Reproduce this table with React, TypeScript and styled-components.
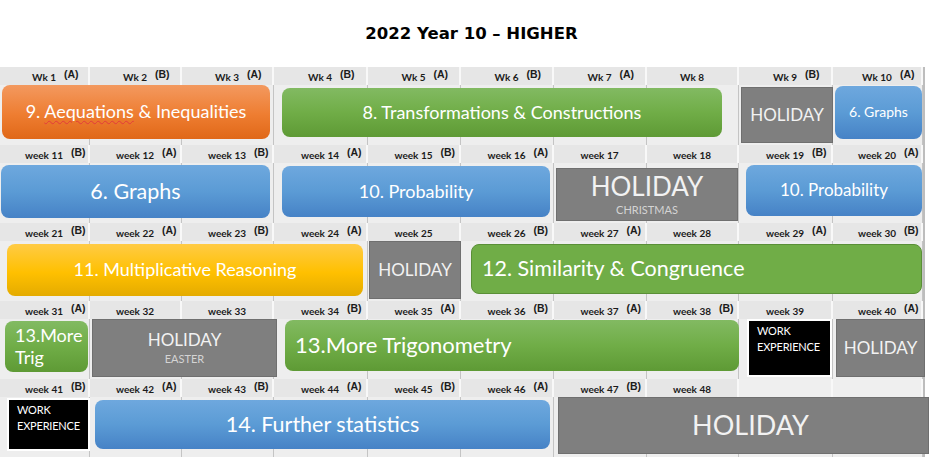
import React from "react";
import styled, { createGlobalStyle, css } from "styled-components";

const GlobalStyle = createGlobalStyle`
  html, body {
    margin: 0;
    padding: 0;
    background: #ffffff;
  }
  body {
    width: 929px;
    height: 458px;
    overflow: hidden;
    font-family: Lato, "Open Sans", sans-serif;
  }
`;

const COLS = "90px 92px 92px 94px 93px 93px 93px 92px 94px 90px";

type Tone = "orange" | "green" | "blue" | "yellow" | "flat" | "holiday" | "work";

const tones: Record<Tone, ReturnType<typeof css>> = {
  orange: css`
    background: linear-gradient(#f3995f, #ee7d31 55%, #e06818);
    border-radius: 8px;
  `,
  green: css`
    background: linear-gradient(#82ba62, #70ad47 50%, #5e9a35);
    border-radius: 8px;
  `,
  blue: css`
    background: linear-gradient(#6ea8de, #5b9bd5 50%, #4682c6);
    border-radius: 8px;
  `,
  yellow: css`
    background: linear-gradient(#ffcb45, #ffc000 55%, #e4ab00);
    border-radius: 8px;
  `,
  flat: css`
    background: #70ad47;
    border: 1px solid #5a8f37;
    border-radius: 8px;
  `,
  holiday: css`
    background: #7f7f7f;
    border: 1px solid #6f6f6f;
  `,
  work: css`
    background: #000000;
    border: 2px solid #ffffff;
    justify-content: flex-start;
  `,
};

const Page = styled.div`
  width: 929px;
`;

const Title = styled.h1`
  margin: 0;
  height: 67px;
  display: flex;
  align-items: center;
  justify-content: center;
  padding-left: 14px;
  box-sizing: border-box;
  font-family: "DejaVu Sans", sans-serif;
  font-size: 16.5px;
  font-weight: bold;
  color: #000;
`;

const Sheet = styled.div`
  width: 923px;
  border-right: 2px solid #bdbdbd;
  background: #efefef;
`;

const Band = styled.section`
  display: grid;
  grid-template-rows: 18px 60px;
`;

const HeaderRow = styled.div`
  display: grid;
  grid-template-columns: ${COLS};
`;

const HeadCell = styled.div<{ $blank?: boolean }>`
  background: ${(p) => (p.$blank ? "#efefef" : "#e6e6e6")};
  border-right: 2px solid #f8f8f8;
  border-bottom: 1px solid #f8f8f8;
  font-size: 10px;
  font-weight: bold;
  color: #1b1b1b;
  text-align: center;
  line-height: 20px;
  white-space: nowrap;
`;

/* zero-width holder so the week label stays centred and the (A)/(B) hangs to its right */
const Letter = styled.span`
  display: inline-block;
  width: 0;
  vertical-align: top;
  line-height: 15px;
  text-align: left;
  font-family: "Liberation Sans", sans-serif;
  font-size: 10.5px;

  & > span {
    padding-left: 8px;
  }
`;

const BodyRow = styled.div`
  display: grid;
  grid-template-columns: ${COLS};
  grid-template-rows: 60px;
`;

const BodyCell = styled.div<{ $col: number }>`
  grid-row: 1;
  grid-column: ${(p) => p.$col};
  border-right: 1px solid #c4c4c4;
  background: #eeeeee;
`;

const Block = styled.div<{
  $tone: Tone;
  $col: number;
  $span: number;
  $m: [number, number, number, number];
  $align?: "center" | "left";
  $size: number;
  $shift?: number;
}>`
  grid-row: 1;
  grid-column: ${(p) => p.$col} / span ${(p) => p.$span};
  margin: ${(p) => p.$m.map((v) => `${v}px`).join(" ")};
  box-sizing: border-box;
  z-index: 1;
  display: flex;
  flex-direction: column;
  justify-content: center;
  align-items: ${(p) => (p.$align === "left" ? "flex-start" : "center")};
  padding: ${(p) => (p.$align === "left" ? "0 10px" : `0 4px 0 ${4 + (p.$shift ?? 0)}px`)};
  color: #ffffff;
  font-size: ${(p) => p.$size}px;
  line-height: 1.2;
  ${(p) => tones[p.$tone]}
`;

const HolidayText = styled.span<{ $size: number }>`
  color: #f2f2f2;
  font-size: ${(p) => p.$size}px;
  line-height: 1.05;
`;

const Sub = styled.span`
  margin-top: 4px;
  color: #d4d4d4;
  font-size: 11px;
  line-height: 1.1;
`;

const Work = styled.span`
  align-self: flex-start;
  color: #ffffff;
  font-size: 11px;
  letter-spacing: -0.2px;
  line-height: 16px;
  padding: 2px 0 0 4px;
`;

const Typo = styled.span`
  text-decoration: underline wavy #e23b3b;
  text-decoration-thickness: 1px;
  text-underline-offset: 2px;
`;

type Week = { label: string; ab?: string } | null;

type Item = {
  tone: Tone;
  col: number;
  span: number;
  m: [number, number, number, number];
  size: number;
  align?: "center" | "left";
  shift?: number;
  content: React.ReactNode;
  sub?: string;
};

const wk = (label: string, ab?: string): Week => ({ label, ab });

const bands: { weeks: Week[]; items: Item[] }[] = [
  {
    weeks: [
      wk("Wk 1", "(A)"), wk("Wk 2", "(B)"), wk("Wk 3", "(A)"), wk("Wk 4", "(B)"), wk("Wk 5", "(A)"),
      wk("Wk 6", "(B)"), wk("Wk 7", "(A)"), wk("Wk 8"), wk("Wk 9", "(B)"), wk("Wk 10", "(A)"),
    ],
    items: [
      { tone: "orange", col: 1, span: 3, m: [0, 4, 6, 2], size: 18, content: <>9. <Typo>Aequations</Typo> &amp; Inequalities</> },
      { tone: "green", col: 4, span: 5, m: [3, 17, 8, 8], size: 18, content: "8. Transformations & Constructions" },
      { tone: "holiday", col: 9, span: 1, m: [2, 0, 2, 2], size: 17, content: "HOLIDAY" },
      { tone: "blue", col: 10, span: 1, m: [1, 1, 6, 2], size: 14, content: "6. Graphs" },
    ],
  },
  {
    weeks: [
      wk("week 11", "(B)"), wk("week 12", "(A)"), wk("week 13", "(B)"), wk("week 14", "(A)"), wk("week 15", "(B)"),
      wk("week 16", "(A)"), wk("week 17"), wk("week 18"), wk("week 19", "(B)"), wk("week 20", "(A)"),
    ],
    items: [
      { tone: "blue", col: 1, span: 3, m: [2, 4, 5, 1], size: 21.5, content: "6. Graphs" },
      { tone: "blue", col: 4, span: 3, m: [3, 4, 6, 8], size: 18, content: "10. Probability" },
      { tone: "holiday", col: 7, span: 2, m: [5, 1, 2, 2], size: 26, content: "HOLIDAY", sub: "CHRISTMAS" },
      { tone: "blue", col: 9, span: 2, m: [2, 1, 7, 7], size: 17, content: "10. Probability" },
    ],
  },
  {
    weeks: [
      wk("week 21", "(B)"), wk("week 22", "(A)"), wk("week 23", "(B)"), wk("week 24", "(A)"), wk("week 25"),
      wk("week 26", "(B)"), wk("week 27", "(A)"), wk("week 28"), wk("week 29", "(A)"), wk("week 30", "(B)"),
    ],
    items: [
      { tone: "yellow", col: 1, span: 4, m: [3, 5, 5, 7], size: 18, content: "11. Multiplicative Reasoning" },
      { tone: "holiday", col: 5, span: 1, m: [0, 0, 2, 1], size: 17, content: "HOLIDAY" },
      { tone: "flat", col: 6, span: 5, m: [3, 1, 7, 10], size: 21.5, align: "left", content: "12. Similarity & Congruence" },
    ],
  },
  {
    weeks: [
      wk("week 31", "(A)"), wk("week 32"), wk("week 33"), wk("week 34", "(B)"), wk("week 35", "(A)"),
      wk("week 36", "(B)"), wk("week 37", "(A)"), wk("week 38", "(B)"), wk("week 39"), wk("week 40", "(A)"),
    ],
    items: [
      { tone: "green", col: 1, span: 1, m: [2, 2, 7, 5], size: 18, align: "left", content: "13.More Trig" },
      { tone: "holiday", col: 2, span: 2, m: [0, -3, 2, 2], size: 17, content: "HOLIDAY", sub: "EASTER" },
      { tone: "green", col: 4, span: 5, m: [1, 0, 8, 11], size: 22, align: "left", content: "13.More Trigonometry" },
      { tone: "work", col: 9, span: 1, m: [0, 1, 2, 8], size: 11, content: "WORK EXPERIENCE" },
      { tone: "holiday", col: 10, span: 1, m: [0, -2, 2, 3], size: 17, content: "HOLIDAY" },
    ],
  },
  {
    weeks: [
      wk("week 41", "(B)"), wk("week 42", "(A)"), wk("week 43", "(B)"), wk("week 44", "(A)"), wk("week 45", "(B)"),
      wk("week 46", "(A)"), wk("week 47", "(B)"), wk("week 48"), null, null,
    ],
    items: [
      { tone: "work", col: 1, span: 1, m: [1, 0, 6, 7], size: 11, content: "WORK EXPERIENCE" },
      { tone: "blue", col: 2, span: 5, m: [3, 4, 8, 5], size: 21.5, content: "14. Further statistics" },
      { tone: "holiday", col: 7, span: 4, m: [0, -6, 3, 4], size: 27, shift: 14, content: "HOLIDAY" },
    ],
  },
];

const renderContent = (item: Item) => {
  if (item.tone === "holiday") {
    return (
      <>
        <HolidayText $size={item.size}>{item.content}</HolidayText>
        {item.sub && <Sub>{item.sub}</Sub>}
      </>
    );
  }
  if (item.tone === "work") {
    return <Work>WORK<br />EXPERIENCE</Work>;
  }
  return <span>{item.content}</span>;
};

const App = () => {
  return (
    <Page>
      <GlobalStyle />
      <Title>2022 Year 10 – HIGHER</Title>
      <Sheet>
        {bands.map((band, b) => (
          <Band key={b}>
            <HeaderRow>
              {band.weeks.map((w, i) =>
                w ? (
                  <HeadCell key={i}>
                    {w.label}
                    {w.ab && (
                      <Letter>
                        <span>{w.ab}</span>
                      </Letter>
                    )}
                  </HeadCell>
                ) : (
                  <HeadCell key={i} $blank />
                )
              )}
            </HeaderRow>
            <BodyRow>
              {band.weeks.map((_, i) => (
                <BodyCell key={i} $col={i + 1} />
              ))}
              {band.items.map((item, i) => (
                <Block
                  key={i}
                  $tone={item.tone}
                  $col={item.col}
                  $span={item.span}
                  $m={item.m}
                  $size={item.size}
                  $align={item.align}
                  $shift={item.shift}
                >
                  {renderContent(item)}
                </Block>
              ))}
            </BodyRow>
          </Band>
        ))}
      </Sheet>
    </Page>
  );
};

export default App;
